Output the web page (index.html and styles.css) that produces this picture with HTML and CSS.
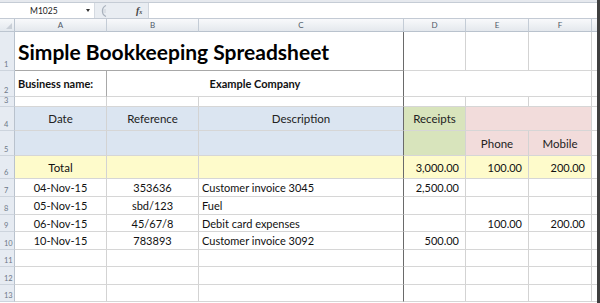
FILE: index.html
```html
<!DOCTYPE html>
<html lang="en">

<head>
    <meta charset="UTF-8">
    <title>Simple Bookkeeping Spreadsheet</title>
    <link rel="stylesheet" href="styles.css">
</head>

<body>
    <div class="window">
        <!-- ribbon remnant + formula bar -->
        <div class="ribbon-edge"></div>
        <div class="formula-bar">
            <div class="name-box">
                <span class="name">M1025</span>
                <span class="arrow"></span>
            </div>
            <div class="fx-area">
                <svg class="handle" width="10" height="14" viewBox="0 0 10 14">
                    <path d="M8 1.5 A6 6 0 0 0 8 12.5" fill="none" stroke="#a9b2bd" stroke-width="1.2"/>
                    <path d="M5 6 H8 M5 8 H8" stroke="#c3c9d1" stroke-width="0.8"/>
                </svg>
                <span class="fx">f<small>x</small></span>
            </div>
            <div class="formula-input"></div>
        </div>

        <div class="sheet">
            <!-- column headers -->
            <div class="corner"><span class="tri"></span></div>
            <div class="ch">A</div>
            <div class="ch">B</div>
            <div class="ch">C</div>
            <div class="ch">D</div>
            <div class="ch">E</div>
            <div class="ch">F</div>
            <div class="ch g"></div>

            <!-- row 1 -->
            <div class="rh">1</div>
            <div class="cell title span3 col-c frame-b">Simple Bookkeeping Spreadsheet</div>
            <div class="cell"></div>
            <div class="cell"></div>
            <div class="cell"></div>
            <div class="cell g"></div>

            <!-- row 2 -->
            <div class="rh">2</div>
            <div class="cell bold frame-r">Business name:</div>
            <div class="cell bold center span2 col-c">Example Company</div>
            <div class="cell span3"></div>
            <div class="cell g"></div>

            <!-- row 3 -->
            <div class="rh">3</div>
            <div class="cell"></div>
            <div class="cell"></div>
            <div class="cell col-c"></div>
            <div class="cell"></div>
            <div class="cell"></div>
            <div class="cell"></div>
            <div class="cell g"></div>

            <!-- row 4 -->
            <div class="rh">4</div>
            <div class="cell blue center">Date</div>
            <div class="cell blue center">Reference</div>
            <div class="cell blue center col-c">Description</div>
            <div class="cell green center">Receipts</div>
            <div class="cell pink span2"></div>
            <div class="cell g"></div>

            <!-- row 5 -->
            <div class="rh">5</div>
            <div class="cell blue"></div>
            <div class="cell blue"></div>
            <div class="cell blue col-c"></div>
            <div class="cell green"></div>
            <div class="cell pink center">Phone</div>
            <div class="cell pink center">Mobile</div>
            <div class="cell g"></div>

            <!-- row 6 -->
            <div class="rh">6</div>
            <div class="cell yellow center total">Total</div>
            <div class="cell yellow"></div>
            <div class="cell yellow col-c"></div>
            <div class="cell yellow num">3,000.00</div>
            <div class="cell yellow num">100.00</div>
            <div class="cell yellow num">200.00</div>
            <div class="cell g"></div>

            <!-- row 7 -->
            <div class="rh">7</div>
            <div class="cell center">04-Nov-15</div>
            <div class="cell center">353636</div>
            <div class="cell col-c">Customer invoice 3045</div>
            <div class="cell num">2,500.00</div>
            <div class="cell"></div>
            <div class="cell"></div>
            <div class="cell g"></div>

            <!-- row 8 -->
            <div class="rh">8</div>
            <div class="cell center">05-Nov-15</div>
            <div class="cell center">sbd/123</div>
            <div class="cell col-c">Fuel</div>
            <div class="cell"></div>
            <div class="cell"></div>
            <div class="cell"></div>
            <div class="cell g"></div>

            <!-- row 9 -->
            <div class="rh">9</div>
            <div class="cell center">06-Nov-15</div>
            <div class="cell center">45/67/8</div>
            <div class="cell col-c">Debit card expenses</div>
            <div class="cell"></div>
            <div class="cell num">100.00</div>
            <div class="cell num">200.00</div>
            <div class="cell g"></div>

            <!-- row 10 -->
            <div class="rh">10</div>
            <div class="cell center">10-Nov-15</div>
            <div class="cell center">783893</div>
            <div class="cell col-c">Customer invoice 3092</div>
            <div class="cell num">500.00</div>
            <div class="cell"></div>
            <div class="cell"></div>
            <div class="cell g"></div>

            <!-- rows 11-13 -->
            <div class="rh">11</div>
            <div class="cell"></div>
            <div class="cell"></div>
            <div class="cell col-c"></div>
            <div class="cell"></div>
            <div class="cell"></div>
            <div class="cell"></div>
            <div class="cell g"></div>

            <div class="rh">12</div>
            <div class="cell"></div>
            <div class="cell"></div>
            <div class="cell col-c"></div>
            <div class="cell"></div>
            <div class="cell"></div>
            <div class="cell"></div>
            <div class="cell g"></div>

            <div class="rh">13</div>
            <div class="cell"></div>
            <div class="cell"></div>
            <div class="cell col-c"></div>
            <div class="cell"></div>
            <div class="cell"></div>
            <div class="cell"></div>
            <div class="cell g"></div>
        </div>
    </div>
</body>

</html>
```

FILE: styles.css
```css
* {
    box-sizing: border-box;
}

body {
    margin: 0;
    overflow: hidden;
    background-color: #ffffff;
    font-family: Lato, "Open Sans", sans-serif;
}

.window {
    width: 600px;
    height: 303px;
    border-right: 3px solid #3f3f3f;
    overflow: hidden;
}

.ribbon-edge {
    height: 3px;
    background-color: #e6e9ee;
    border-bottom: 1px solid #c5ccd5;
}

.formula-bar {
    display: flex;
    height: 16px;
    background-color: #e9edf2;
    border-bottom: 1px solid #c3cad4;
}

.name-box {
    width: 95px;
    display: flex;
    align-items: center;
    background-color: #ffffff;
    border-right: 1px solid #d5dae1;
    padding-left: 30px;
}

.name {
    font-size: 8.5px;
    color: #222222;
    flex: 1;
}

.arrow {
    width: 0;
    height: 0;
    margin-right: 4px;
    border-left: 2.5px solid transparent;
    border-right: 2.5px solid transparent;
    border-top: 3px solid #333333;
}

.fx-area {
    width: 53px;
    display: flex;
    align-items: center;
    padding-left: 3px;
}

.handle {
    display: block;
}

.fx {
    margin-left: 28px;
    font-family: "Liberation Serif", serif;
    font-style: italic;
    font-weight: bold;
    font-size: 10px;
    color: #444444;
}

.fx small {
    font-size: 6px;
}

.formula-input {
    flex: 1;
    background-color: #ffffff;
    border-left: 1px solid #cfd5dd;
}

.sheet {
    display: grid;
    grid-template-columns: 15px 92px 92px 205px 62px 63px 63px 5px;
    grid-template-rows: 13px 39px 26px 10px 24px 25px 23px 18px 18px 17px 18px 17px 18px 17px;
}

.corner {
    position: relative;
    background: linear-gradient(#f6f8fa, #e3e8ee);
    border-right: 1px solid #bcc5d0;
    border-bottom: 1px solid #bcc5d0;
}

.corner .tri {
    position: absolute;
    right: 2px;
    bottom: 2px;
    width: 0;
    height: 0;
    border-left: 6px solid transparent;
    border-bottom: 6px solid #c9cfd7;
}

.ch {
    display: flex;
    align-items: center;
    justify-content: center;
    font-size: 8px;
    color: #4f5a68;
    background: linear-gradient(#f8f9fb, #e4e8ed);
    border-right: 1px solid #c4ccd6;
    border-bottom: 1px solid #b9c2cd;
}

.rh {
    display: flex;
    align-items: flex-end;
    padding: 0 0 1px 4px;
    font-size: 7.5px;
    color: #6d7888;
    background-color: #e6ebf2;
    border-right: 1px solid #b9c2cd;
    border-bottom: 1px solid #cdd4dd;
}

.cell {
    display: flex;
    align-items: center;
    padding: 0 3px;
    font-size: 11px;
    color: #111111;
    white-space: nowrap;
    overflow: hidden;
    border-right: 1px solid #d3d3d3;
    border-bottom: 1px solid #d6d6d6;
}

.g {
    border-right: none;
}

.ch.g {
    border-right: none;
}

.span2 {
    grid-column: span 2;
}

.span3 {
    grid-column: span 3;
}

.col-c {
    border-right: 1px solid #6a6a6a;
}

.frame-b {
    border-bottom: 1px solid #a8a8a8;
}

.frame-r {
    border-right: 1px solid #a8a8a8;
}

.title {
    font-size: 21px;
    font-weight: bold;
    color: #000000;
    overflow: visible;
}

.bold {
    font-weight: bold;
}

.center {
    justify-content: center;
}

.num {
    justify-content: flex-end;
    padding-right: 6px;
}

.total {
    font-size: 11.5px;
}

.blue {
    background-color: #dbe5f1;
    color: #222222;
    font-size: 11.5px;
}

.green {
    background-color: #d8e4bc;
    color: #222222;
    font-size: 11.5px;
}

.pink {
    background-color: #f2dcdb;
    color: #222222;
    font-size: 11.5px;
}

.yellow {
    background-color: #fefbcb;
}
```
